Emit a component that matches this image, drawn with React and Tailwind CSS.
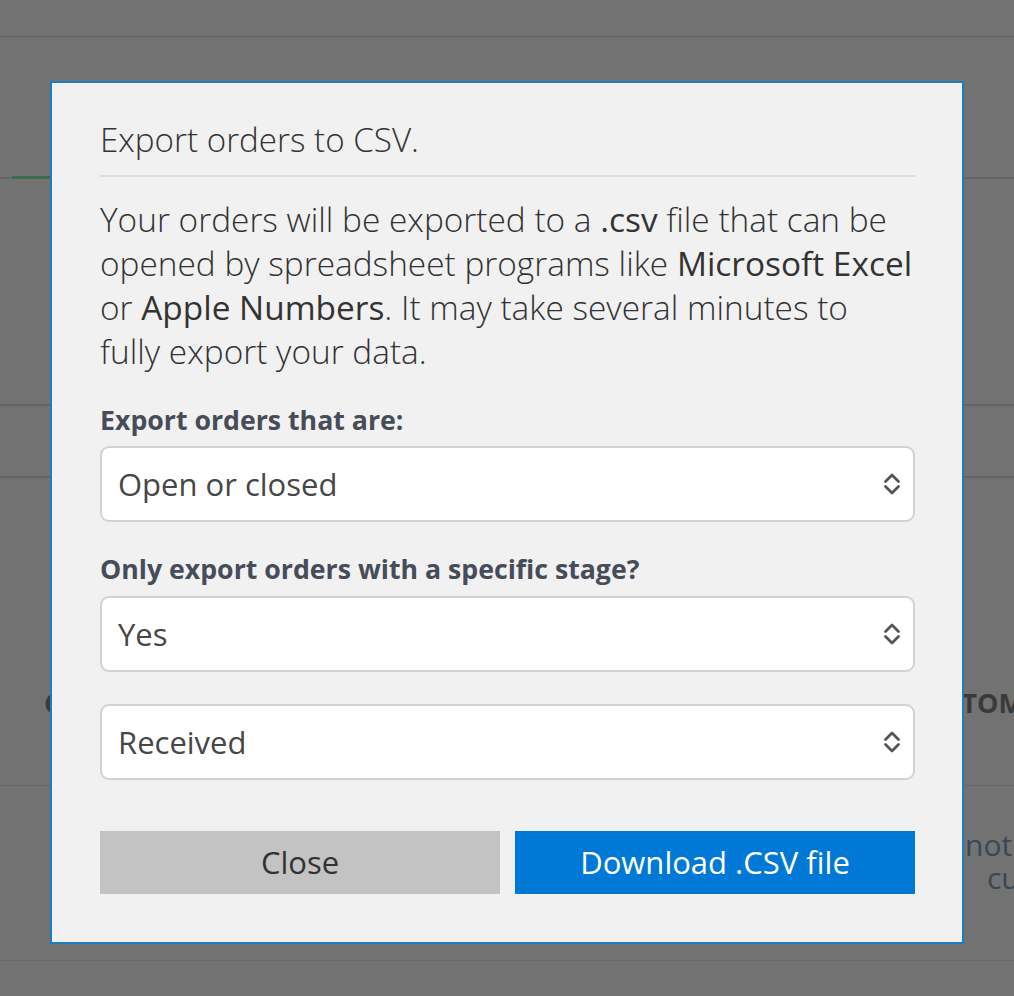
import React from "react";

function Chevrons() {
  return (
    <svg
      width="18"
      height="24"
      viewBox="0 0 18 24"
      fill="none"
      stroke="#555555"
      strokeWidth="2.8"
      strokeLinecap="round"
      strokeLinejoin="round"
      className="shrink-0"
    >
      <path d="M2.5 9.5 L9 3 L15.5 9.5" />
      <path d="M2.5 14.5 L9 21 L15.5 14.5" />
    </svg>
  );
}

function SelectBox({ value, className = "" }) {
  return (
    <div
      className={
        "flex h-[76px] items-center justify-between rounded-[9px] border-2 border-[#d2d2d2] bg-white pl-4 pr-3 " +
        className
      }
    >
      <span className="text-[31px] font-normal text-[#474747]">{value}</span>
      <Chevrons />
    </div>
  );
}

export default function App() {
  return (
    <div
      className="relative h-[996px] w-[1014px] overflow-hidden bg-[#727272]"
      style={{ fontFamily: '"Open Sans", "Noto Sans", sans-serif' }}
    >
      {/* Background page (dimmed by overlay) */}
      <div className="flex flex-col">
        <div className="h-[37px] border-b border-[#5f5f5f]" />
        <div className="flex h-[142px] items-end border-b-2 border-[#666666] pl-3">
          <div className="mb-[-2px] h-[3px] w-[38px] bg-[#3f6b52]" />
        </div>
        <div className="h-[227px] border-b-2 border-[#646464]" />
        <div className="h-[72px] border-b-2 border-[#646464]" />
        <div className="flex h-[308px] items-start border-b border-[#666666] pt-[208px]">
          <div className="w-[100px] whitespace-nowrap pl-[44px] text-[27px] font-bold leading-[34px] text-[#3a3a3a]">
            CODE
          </div>
          <div className="ml-[809px] whitespace-nowrap text-[27px] font-bold leading-[34px] text-[#3a3a3a]">
            CUSTOMER
          </div>
        </div>
        <div className="flex h-[175px] flex-col border-b border-[#666666] pt-[42px] text-[30px] leading-[33px] text-[#3a4756]">
          <div className="whitespace-nowrap pl-[965px]">not</div>
          <div className="whitespace-nowrap pl-[987px]">cu</div>
        </div>
      </div>

      {/* Modal */}
      <div className="absolute left-[50px] top-[81px] w-[914px] border-2 border-[#1b7dc2] bg-[#f1f1f1] pb-[48px] pl-[48px] pr-[47px] pt-[35px]">
        <h2 className="text-[33.2px] font-light leading-[44px] text-[#333333]">Export orders to CSV.</h2>
        <div className="mt-[13px] h-[2px] bg-[#dcdcdc]" />
        <p className="mt-[20px] whitespace-nowrap text-[33.4px] font-light leading-[44px] text-[#333333]">
          Your orders will be exported to a <span className="font-medium">.csv</span> file that can be
          <br />
          opened by spreadsheet programs like <span className="font-medium">Microsoft Excel</span>
          <br />
          or <span className="font-medium">Apple Numbers</span>. It may take several minutes to
          <br />
          fully export your data.
        </p>

        <label className="mt-[31px] block whitespace-nowrap text-[26.7px] font-bold leading-[32px] text-[#464c58]">
          Export orders that are:
        </label>
        <SelectBox value="Open or closed" className="mt-[10px]" />

        <label className="mt-[31px] block whitespace-nowrap text-[26.7px] font-bold leading-[32px] text-[#464c58]">
          Only export orders with a specific stage?
        </label>
        <SelectBox value="Yes" className="mt-[11px]" />
        <SelectBox value="Received" className="mt-[32px]" />

        <div className="mt-[51px] flex gap-[15px]">
          <button className="flex h-[63px] flex-1 items-center justify-center bg-[#c3c3c3] text-[31px] text-[#333333]">
            Close
          </button>
          <button className="flex h-[63px] flex-1 items-center justify-center bg-[#0079d6] text-[31px] text-white">
            Download .CSV file
          </button>
        </div>
      </div>
    </div>
  );
}
